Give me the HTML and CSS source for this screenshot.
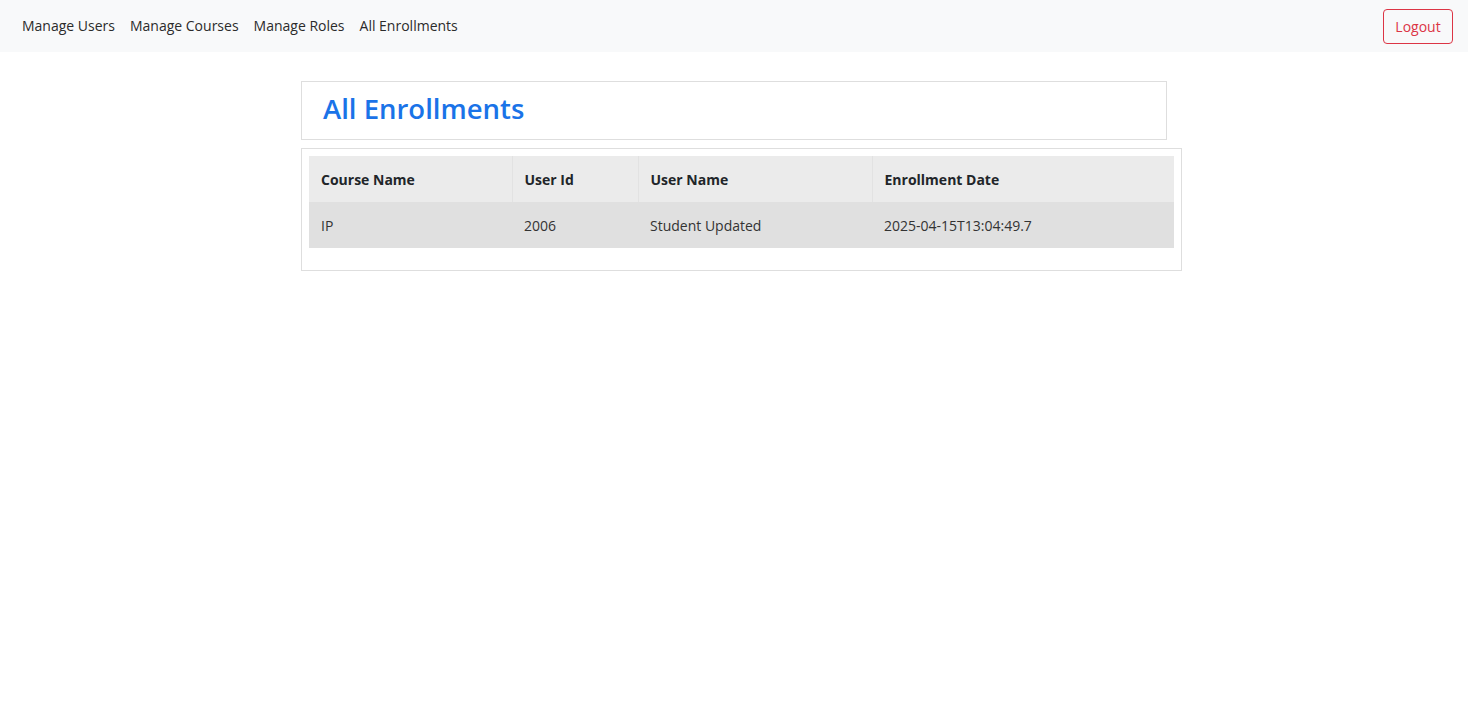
FILE: index.html
```html
<!DOCTYPE html>
<html>
<head>
<meta charset="utf-8">
<link rel="stylesheet" href="styles.css">
</head>
<body>
<nav class="navbar">
  <div class="nav-links">
    <a href="#">Manage Users</a>
    <a href="#">Manage Courses</a>
    <a href="#">Manage Roles</a>
    <a href="#">All Enrollments</a>
  </div>
  <button class="logout">Logout</button>
</nav>
<main class="page">
  <div class="title-box"><h1>All Enrollments</h1></div>
  <div class="table-box">
    <table>
      <thead>
        <tr><th class="c1">Course Name</th><th class="c2">User Id</th><th class="c3">User Name</th><th>Enrollment Date</th></tr>
      </thead>
      <tbody>
        <tr><td>IP</td><td>2006</td><td>Student Updated</td><td>2025-04-15T13:04:49.7</td></tr>
      </tbody>
    </table>
  </div>
</main>
</body>
</html>
```
FILE: styles.css
```css
* { box-sizing: border-box; }
body {
  margin: 0;
  font-family: "Open Sans", "Noto Sans", sans-serif;
  color: #212529;
  background: #fff;
}
.navbar {
  height: 52px;
  background: #f8f9fa;
  display: flex;
  align-items: center;
  justify-content: space-between;
  padding: 0 15px 2px 22px;
}
.nav-links { display: flex; gap: 15px; }
.nav-links a {
  color: #2b2b2b;
  text-decoration: none;
  font-size: 14px;
  letter-spacing: 0;
}
.logout {
  font-family: inherit;
  font-size: 14px;
  color: #dc3545;
  background: transparent;
  border: 1px solid #dc3545;
  border-radius: 4px;
  width: 70px;
  height: 35px;
  padding: 0;
  margin-top: 2px;
}
.page {
  width: 866px;
  margin: 29px auto 0;
}
.title-box {
  border: 1px solid #dedede;
  height: 59px;
  display: flex;
  align-items: center;
  padding: 0 0 4px 21px;
}
.title-box h1 {
  margin: 0;
  font-size: 27.5px;
  font-weight: 600;
  color: #1a73e8;
  letter-spacing: 0;
}
.table-box {
  margin-top: 8px;
  width: 881px;
  border: 1px solid #dedede;
  padding: 7px 7px 22px;
}
table {
  width: 865px;
  border-collapse: collapse;
  font-size: 14px;
}
th, td {
  text-align: left;
  padding: 0 12px;
  height: 46px;
}
th {
  background: #ebebeb;
  font-weight: 700;
  color: #212529;
  border-right: 1px solid #e2e2e2;
}
th:last-child { border-right: none; }
td { background: #e0e0e0; color: #333; }
.c1 { width: 203px; }
.c2 { width: 126px; }
.c3 { width: 234px; }
```
